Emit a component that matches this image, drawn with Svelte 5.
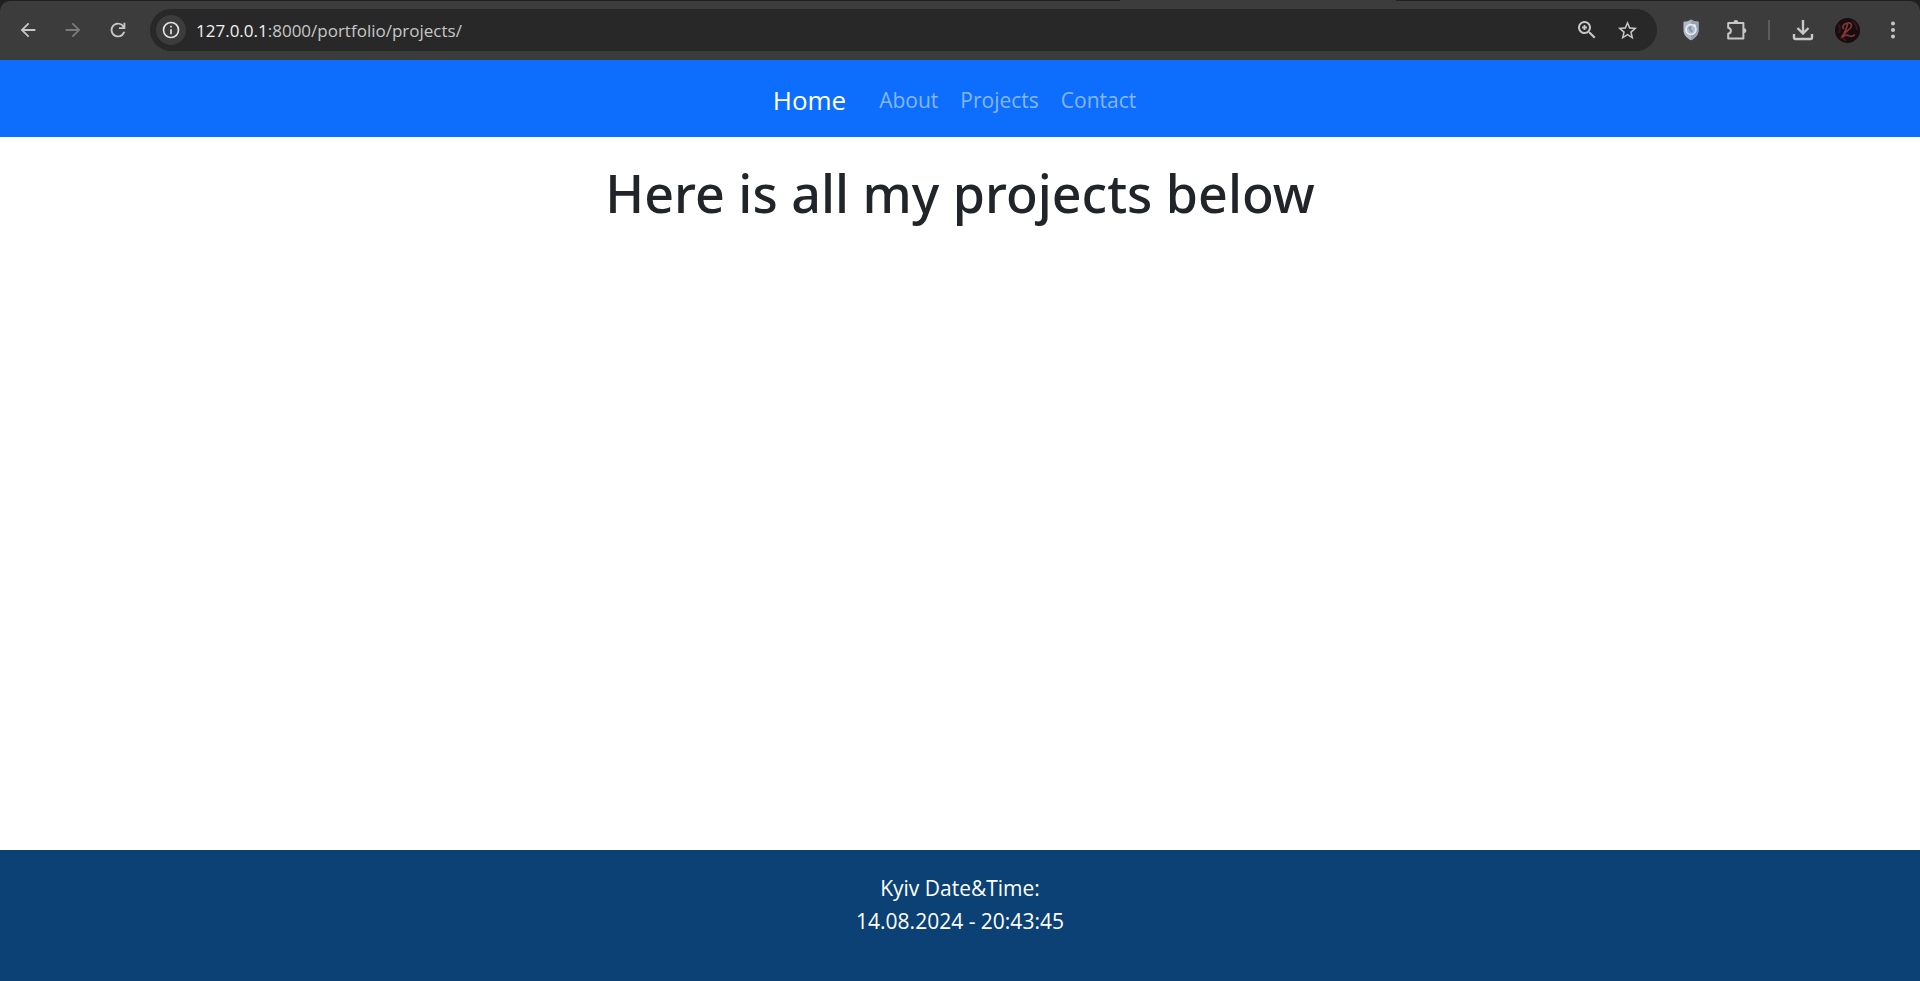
<script lang="ts">
  const links = ['About', 'Projects', 'Contact'];
  const path = '/portfolio/projects/';
</script>

<div class="window">
  <header class="browser">
    <div class="tabs"><span class="tab"></span></div>
    <div class="toolbar">
      <button class="tool" aria-label="Back">
        <svg width="22" height="22" viewBox="0 0 24 24"><path d="M20 11H7.83l5.59-5.59L12 4l-8 8 8 8 1.41-1.41L7.83 13H20z" /></svg>
      </button>
      <button class="tool dim" aria-label="Forward" disabled>
        <svg width="22" height="22" viewBox="0 0 24 24"><path d="M4 11h12.17l-5.59-5.59L12 4l8 8-8 8-1.41-1.41L16.17 13H4z" /></svg>
      </button>
      <button class="tool" aria-label="Reload">
        <svg width="22" height="22" viewBox="0 0 24 24"><path d="M12 20a8 8 0 1 1 6-13.2V4h2v7h-7V9h4.2A6 6 0 1 0 17.65 14h2.1A8 8 0 0 1 12 20z" /></svg>
      </button>
      <div class="omnibox">
        <button class="info" aria-label="Site information">
          <svg width="20" height="20" viewBox="0 0 24 24"><path d="M11 7h2v2h-2zm0 4h2v6h-2zm1-9a10 10 0 1 0 0 20 10 10 0 0 0 0-20zm0 18a8 8 0 1 1 0-16 8 8 0 0 1 0 16z" /></svg>
        </button>
        <span class="address"><b>127.0.0.1</b>:8000{path}</span>
        <button class="action" aria-label="Zoom">
          <svg width="24" height="24" viewBox="0 0 24 24"><path d="M15.5 14h-.79l-.28-.27A6.5 6.5 0 1 0 13.73 14.43l.27.28v.79l5 4.99L20.49 19zm-6 0a4.5 4.5 0 1 1 0-9 4.5 4.5 0 0 1 0 9zm.9-7H8.6v1.6H7v1.8h1.6V12h1.8v-1.6H12V8.6h-1.6z" /></svg>
        </button>
        <button class="action" aria-label="Bookmark this page">
          <svg width="23" height="23" viewBox="0 0 24 24"><path d="M22 9.24l-7.19-.62L12 2 9.19 8.63 2 9.24l5.46 4.73L5.82 21 12 17.27 18.18 21l-1.63-7.03zM12 15.4l-3.76 2.27 1-4.28-3.32-2.88 4.38-.38L12 6.1l1.71 4.04 4.38.38-3.32 2.88 1 4.28z" /></svg>
        </button>
      </div>
      <button class="tool" aria-label="Shield extension">
        <svg width="18" height="22" viewBox="0 0 18 22">
          <path d="M9 .5c2.300 1.500 4.800 2.200 7.500 2.300v8.200c0 4.500-3 8-7.500 10.300C4.500 19 1.500 15.500 1.500 11V2.800C4.200 2.700 6.700 2 9 .5z" fill="#b3bac7" />
          <path d="M9 .5c2.300 1.500 4.800 2.200 7.500 2.300v8.200c0 4.500-3 8-7.500 10.300z" fill="#98a1b2" />
          <circle cx="9" cy="10.500" r="5" fill="#b4bfce" stroke="#e8ecf1" stroke-width="1.600" />
          <path d="M6 9l2-2 2 1-1 2 2 2-2 2-1-2z" fill="#8895aa" />
          <circle cx="12.500" cy="6.500" r="1.200" fill="#f1f3f6" />
        </svg>
      </button>
      <button class="tool" aria-label="Extensions">
        <svg width="22" height="22" viewBox="0 0 22 22">
          <path d="M3.200 4h15.200v15.500H3.200v-4.700c3.600-.8 3.600-5.300 0-6.100z" fill="none" stroke="#c7c7c7" stroke-width="2" stroke-linejoin="round" />
          <path d="M8.500 3.500a2.400 2.400 0 0 1 4.800 0zM19 9.300a2.400 2.400 0 0 1 0 4.800z" />
        </svg>
      </button>
      <span class="divider"></span>
      <button class="tool" aria-label="Downloads">
        <svg width="22" height="22" viewBox="0 0 22 22"><path d="M11 1v13M5.500 9l5.500 5.500L16.500 9M2 15v3.500a1.500 1.500 0 0 0 1.500 1.500h15a1.500 1.500 0 0 0 1.500-1.500V15" fill="none" stroke="#c7c7c7" stroke-width="2.400" /></svg>
      </button>
      <button class="tool" aria-label="Profile">
        <svg width="25" height="25" viewBox="0 0 25 25">
          <circle cx="12.500" cy="12.500" r="12.500" fill="#170d0e" />
          <path d="M3 7c3 1 2 5 1 8M17 3c3 2 5 5 5 9M5 20c3-1 4 1 6 3" fill="none" stroke="#3a1719" stroke-width="2" />
          <path d="M8.500 10.500c-2-2 .5-5 4.500-5.500 3.500-.3 4.500 2.500 2.500 5-2 2.300-5.500 4.500-8 7.500-1 1.500-.5 2 1 .9 2-1.500 3.500-1.600 5.500-.6 2 1 4 .8 5.500-.8M12.500 6.500c-.8 3-1.500 5.500-3.500 9" fill="none" stroke="#843538" stroke-width="1.700" stroke-linecap="round" />
        </svg>
      </button>
      <button class="tool" aria-label="Browser menu">
        <svg width="22" height="22" viewBox="0 0 22 22"><circle cx="11" cy="4.500" r="2" /><circle cx="11" cy="11" r="2" /><circle cx="11" cy="17.500" r="2" /></svg>
      </button>
    </div>
  </header>

  <nav class="navbar">
    <a class="brand" href="#home">Home</a>
    <ul>
      {#each links as link}
        <li><a href={'#' + link.toLowerCase()}>{link}</a></li>
      {/each}
    </ul>
  </nav>

  <main>
    <h1>Here is all my projects below</h1>
  </main>

  <footer>
    <p>Kyiv Date&amp;Time:</p>
    <p>14.08.2024 - 20:43:45</p>
  </footer>
</div>

<style>
  :global(body) {
    margin: 0;
    background: #fff;
  }
  .window {
    display: flex;
    flex-direction: column;
    min-height: 100vh;
    font-family: 'Segoe UI', 'Open Sans', 'Noto Sans', sans-serif;
    color: #212529;
  }
  .browser {
    background: #1f2020;
  }
  .tabs {
    display: flex;
    justify-content: center;
    height: 1px;
    padding-left: 31%;
  }
  .tab {
    width: 276px;
    background: #3c3c3c;
  }
  .toolbar {
    display: flex;
    align-items: center;
    box-sizing: border-box;
    height: 59px;
    padding: 0 5px 1px;
    background: #3c3c3c;
    border-radius: 10px 10px 0 0;
  }
  button {
    display: flex;
    flex: none;
    align-items: center;
    justify-content: center;
    padding: 0;
    border: 0;
    background: none;
  }
  svg {
    display: block;
    fill: #c7c7c7;
  }
  .tool {
    width: 45px;
    height: 42px;
  }
  .dim svg {
    fill: #7b7b7b;
  }
  .omnibox {
    display: flex;
    flex: 1;
    align-items: center;
    box-sizing: border-box;
    height: 42px;
    margin: 0 11px 0 10px;
    padding: 0 10px 0 6px;
    border-radius: 21px;
    background: #282828;
  }
  .info {
    width: 30px;
    height: 30px;
    border-radius: 50%;
    background: #3c3c3c;
  }
  .info svg {
    fill: #e3e3e3;
  }
  .address {
    flex: 1;
    padding: 2px 0 0 10px;
    font-size: 17px;
    line-height: 24px;
    color: #c7c7c7;
  }
  .address b {
    font-weight: 400;
    color: #f1f1f1;
  }
  .action {
    width: 40px;
    height: 40px;
  }
  .divider {
    width: 2px;
    height: 20px;
    margin: 0 10px;
    background: #5c5c5c;
  }
  .navbar {
    display: flex;
    align-items: center;
    justify-content: center;
    box-sizing: border-box;
    height: 77px;
    padding-top: 2px;
    background: #0d6efd;
  }
  .navbar a {
    text-decoration: none;
  }
  .brand {
    margin-right: 22px;
    font-size: 26px;
    line-height: 42px;
    color: #fff;
  }
  ul {
    display: flex;
    margin: 0;
    padding: 0;
    list-style: none;
  }
  li a {
    padding: 0 11px;
    font-size: 21px;
    line-height: 34px;
    color: #86b7fe;
  }
  main {
    flex: 1;
    padding-top: 22px;
    text-align: center;
  }
  h1 {
    margin: 0;
    font-family: 'Segoe UI', 'Noto Sans', 'Open Sans', sans-serif;
    font-size: 52px;
    font-weight: 500;
    line-height: 68px;
  }
  footer {
    padding: 22px 0 43px;
    background: #0b4174;
    color: #fff;
    text-align: center;
  }
  footer p {
    margin: 0;
    font-size: 21px;
    line-height: 33px;
  }
</style>
